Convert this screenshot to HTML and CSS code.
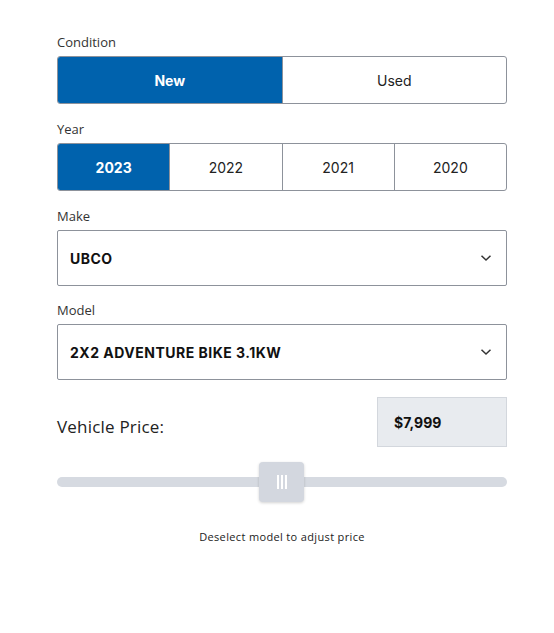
FILE: index.html
```html
<!DOCTYPE html>
<html>
<head>
<meta charset="utf-8">
<link rel="stylesheet" href="styles.css">
</head>
<body>
<div class="form">
  <div class="field">
    <div class="label">Condition</div>
    <div class="seg">
      <div class="opt active">New</div>
      <div class="opt">Used</div>
    </div>
  </div>
  <div class="field">
    <div class="label">Year</div>
    <div class="seg">
      <div class="opt active">2023</div>
      <div class="opt">2022</div>
      <div class="opt">2021</div>
      <div class="opt">2020</div>
    </div>
  </div>
  <div class="field field-make">
    <div class="label">Make</div>
    <div class="select">
      <span class="value">UBCO</span>
      <svg class="chev" width="12" height="8" viewBox="0 0 12 8"><path d="M1.5 1.8 L6 6 L10.5 1.8" fill="none" stroke="#333" stroke-width="1.5"/></svg>
    </div>
  </div>
  <div class="field field-model">
    <div class="label">Model</div>
    <div class="select">
      <span class="value">2X2 ADVENTURE BIKE 3.1KW</span>
      <svg class="chev" width="12" height="8" viewBox="0 0 12 8"><path d="M1.5 1.8 L6 6 L10.5 1.8" fill="none" stroke="#333" stroke-width="1.5"/></svg>
    </div>
  </div>
  <div class="price-row">
    <div class="price-label">Vehicle Price:</div>
    <div class="price-box">$7,999</div>
  </div>
  <div class="slider">
    <div class="track"></div>
    <div class="thumb"><span></span><span></span><span></span></div>
  </div>
  <div class="note">Deselect model to adjust price</div>
</div>
</body>
</html>
```
FILE: styles.css
```css
html, body {
  margin: 0;
  padding: 0;
  background: #fff;
}
.form {
  width: 450px;
  padding: 33px 0 0 57px;
  font-family: "Open Sans", "Liberation Sans", sans-serif;
  color: #222;
}
.field {
  margin-bottom: 16px;
}
.field-make {
  margin-bottom: 15px;
}
.field-model {
  margin-bottom: 17px;
}
.label {
  font-size: 13px;
  line-height: 18px;
  color: #333;
  margin-bottom: 5px;
}
.seg {
  display: flex;
  height: 48px;
  box-sizing: border-box;
  border: 1px solid #8d929b;
  border-radius: 3px;
  overflow: hidden;
}
.opt {
  flex: 1;
  display: flex;
  align-items: center;
  justify-content: center;
  font-family: "Inter", "Liberation Sans", sans-serif;
  font-size: 14px;
  color: #222;
  border-left: 1px solid #8d929b;
}
.opt:first-child {
  border-left: none;
}
.opt.active {
  background: #0062ad;
  color: #fff;
  font-weight: 700;
}
.select {
  height: 56px;
  box-sizing: border-box;
  border: 1px solid #8d929b;
  border-radius: 2px;
  display: flex;
  align-items: center;
  justify-content: space-between;
  padding: 0 14px 0 12px;
}
.value {
  font-family: "Inter", "Liberation Sans", sans-serif;
  font-weight: 700;
  font-size: 14px;
  letter-spacing: 0.5px;
  color: #111;
}
.price-row {
  display: flex;
  justify-content: space-between;
  align-items: center;
  height: 50px;
}
.price-label {
  font-size: 17px;
  letter-spacing: 0.2px;
  color: #222;
  padding-top: 9px;
}
.price-box {
  width: 130px;
  height: 50px;
  box-sizing: border-box;
  background: #e8ebef;
  border: 1px solid #d3d7dd;
  display: flex;
  align-items: center;
  padding-left: 16px;
  font-family: "Inter", "Liberation Sans", sans-serif;
  font-weight: 700;
  font-size: 14px;
  color: #111;
}
.slider {
  position: relative;
  height: 40px;
  margin-top: 15px;
  display: flex;
  align-items: center;
}
.track {
  width: 100%;
  height: 10px;
  border-radius: 5px;
  background: #d6dae1;
}
.thumb {
  position: absolute;
  left: 202px;
  top: 0;
  width: 45px;
  height: 40px;
  border-radius: 4px;
  background: #d3d7df;
  box-shadow: 0 1px 3px rgba(0,0,0,0.18);
  display: flex;
  align-items: center;
  justify-content: center;
  gap: 2px;
}
.thumb span {
  width: 2px;
  height: 14px;
  background: #fff;
}
.note {
  text-align: center;
  font-size: 11px;
  letter-spacing: 0.35px;
  color: #222;
  margin-top: 27px;
}
```
